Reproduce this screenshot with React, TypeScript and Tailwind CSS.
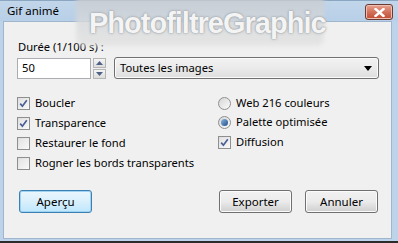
import React from "react";

const font = { fontFamily: '"Segoe UI", "Noto Sans", "Open Sans", sans-serif' };

function Check({ checked }: { checked?: boolean }) {
  return (
    <div className="w-[13px] h-[13px] border border-[#8e8f8f] bg-gradient-to-br from-[#dcdcdc] to-[#fbfbfb] p-[1px] flex items-center justify-center shrink-0">
      <div className="w-full h-full bg-gradient-to-br from-[#e4e4e4] to-[#f6f6f6] flex items-center justify-center">
        {checked && (
          <svg width="9" height="9" viewBox="0 0 9 9">
            <path d="M1.2 4.6 L3.4 7.2 L7.8 1.2" fill="none" stroke="#4a5e96" strokeWidth="1.7" />
          </svg>
        )}
      </div>
    </div>
  );
}

function Radio({ checked }: { checked?: boolean }) {
  return (
    <div className="w-[13px] h-[13px] rounded-full border border-[#8e8f8f] bg-gradient-to-br from-[#d6d6d6] to-[#fbfbfb] flex items-center justify-center shrink-0">
      {checked && <div className="w-[7px] h-[7px] rounded-full bg-gradient-to-br from-[#8fb7df] to-[#1c4f8c]" />}
    </div>
  );
}

function Btn({ children, focus }: { children: React.ReactNode; focus?: boolean }) {
  return (
    <div
      className={
        "w-[73px] h-[23px] rounded-[3px] border flex items-center justify-center text-[11.5px] text-black " +
        (focus
          ? "border-[#3c7fb1] bg-gradient-to-b from-[#eaf6fd] via-[#d9f0fc] to-[#bee6fd] shadow-[inset_0_0_0_1px_#9fd3f4]"
          : "border-[#707070] bg-gradient-to-b from-[#f2f2f2] via-[#ebebeb] to-[#cfcfcf] shadow-[inset_0_0_0_1px_#fbfbfb]")
      }
    >
      {children}
    </div>
  );
}

export default function App() {
  return (
    <div style={font} className="relative w-[398px] h-[243px] overflow-hidden bg-[#bcd3ea] border-b-[2px] border-b-[#2b2b2b] flex flex-col">
      <div className="h-[21px] shrink-0 flex items-center pl-[7px] text-[11.5px] text-black bg-gradient-to-b from-[#c2d6ea] to-[#b7cfe8] border-t border-[#8ba6c2]">
        Gif animé
      </div>
      <div className="flex-1 ml-[3px] mr-[6px] mb-[2px] bg-[#f0f0f0] border border-[#9fb6cd] flex flex-col text-[11.2px] text-black">
        <div className="pl-[14px] mt-[17px] leading-[16px]">Durée (1/100 s) :</div>
        <div className="flex items-center mt-[2px] pl-[13px] h-[22px]">
          <div className="w-[74px] h-[21px] border border-[#abadb3] bg-white flex items-center pl-[4px]">50</div>
          <div className="flex flex-col gap-[1px] ml-[2px] h-[21px] justify-center">
            <div className="w-[13px] h-[10px] border border-[#b5b5b5] bg-gradient-to-b from-[#f5f5f5] to-[#dcdcdc] flex items-center justify-center">
              <svg width="7" height="4" viewBox="0 0 7 4"><path d="M0 4 L3.5 0 L7 4Z" fill="#4d6185" /></svg>
            </div>
            <div className="w-[13px] h-[10px] border border-[#b5b5b5] bg-gradient-to-b from-[#f5f5f5] to-[#dcdcdc] flex items-center justify-center">
              <svg width="7" height="4" viewBox="0 0 7 4"><path d="M0 0 L3.5 4 L7 0Z" fill="#4d6185" /></svg>
            </div>
          </div>
          <div className="ml-[8px] w-[265px] h-[22px] rounded-[3px] border border-[#707070] bg-gradient-to-b from-[#f2f2f2] via-[#ebebeb] to-[#dddddd] shadow-[inset_0_0_0_1px_#fbfbfb] flex items-center pl-[5px] pr-[6px] justify-between">
            <span>Toutes les images</span>
            <svg width="8" height="5" viewBox="0 0 8 5"><path d="M0 0 L8 0 L4 5Z" fill="#000" /></svg>
          </div>
        </div>
        <div className="flex mt-[14px] pl-[13px]">
          <div className="flex flex-col w-[201px]">
            {[
              ["Boucler", true],
              ["Transparence", true],
              ["Restaurer le fond", false],
              ["Rogner les bords transparents", false],
            ].map(([t, c]) => (
              <div key={t as string} className="flex items-center h-[20px] gap-[5px]">
                <Check checked={c as boolean} />
                <span>{t as string}</span>
              </div>
            ))}
          </div>
          <div className="flex flex-col">
            <div className="flex items-center h-[20px] gap-[5px]"><Radio /><span>Web 216 couleurs</span></div>
            <div className="flex items-center h-[19px] gap-[5px]"><Radio checked /><span>Palette optimisée</span></div>
            <div className="flex items-center h-[21px] gap-[5px]"><Check checked /><span>Diffusion</span></div>
          </div>
        </div>
        <div className="flex mt-[17px] pl-[15px]">
          <Btn focus>Aperçu</Btn>
          <div className="ml-[127px]"><Btn>Exporter</Btn></div>
          <div className="ml-[13px]"><Btn>Annuler</Btn></div>
        </div>
      </div>
      <div className="absolute right-[5px] top-[4px] w-[28px] h-[16px] rounded-[3px] border border-[#6b3a33] bg-gradient-to-b from-[#e8a493] via-[#d1715b] to-[#c24a32] shadow-[inset_0_0_0_1px_#eec0b4] flex items-center justify-center">
        <svg width="11" height="9" viewBox="0 0 11 9">
          <path d="M1.5 1 L9.5 8 M9.5 1 L1.5 8" stroke="#fff" strokeWidth="2.4" strokeLinecap="square" />
        </svg>
      </div>
      <div className="absolute left-[76px] top-[-6px] w-[248px] h-[52px] rounded-[8px] bg-gradient-to-b from-[#c4c8cc]/80 via-[#d6d8da]/80 to-[#e2e2e2]/80 blur-[2px]" />
      <div
        className="absolute left-[89px] top-[6px] text-[29px] leading-[34px] font-bold text-[#f4f4f4] tracking-[-1px]"
        style={{ fontFamily: '"Liberation Sans", Arial, sans-serif', textShadow: "0 0 3px #9aa0a6, 0 0 1px #8a9096" }}
      >
        PhotofiltreGraphic
      </div>
    </div>
  );
}
